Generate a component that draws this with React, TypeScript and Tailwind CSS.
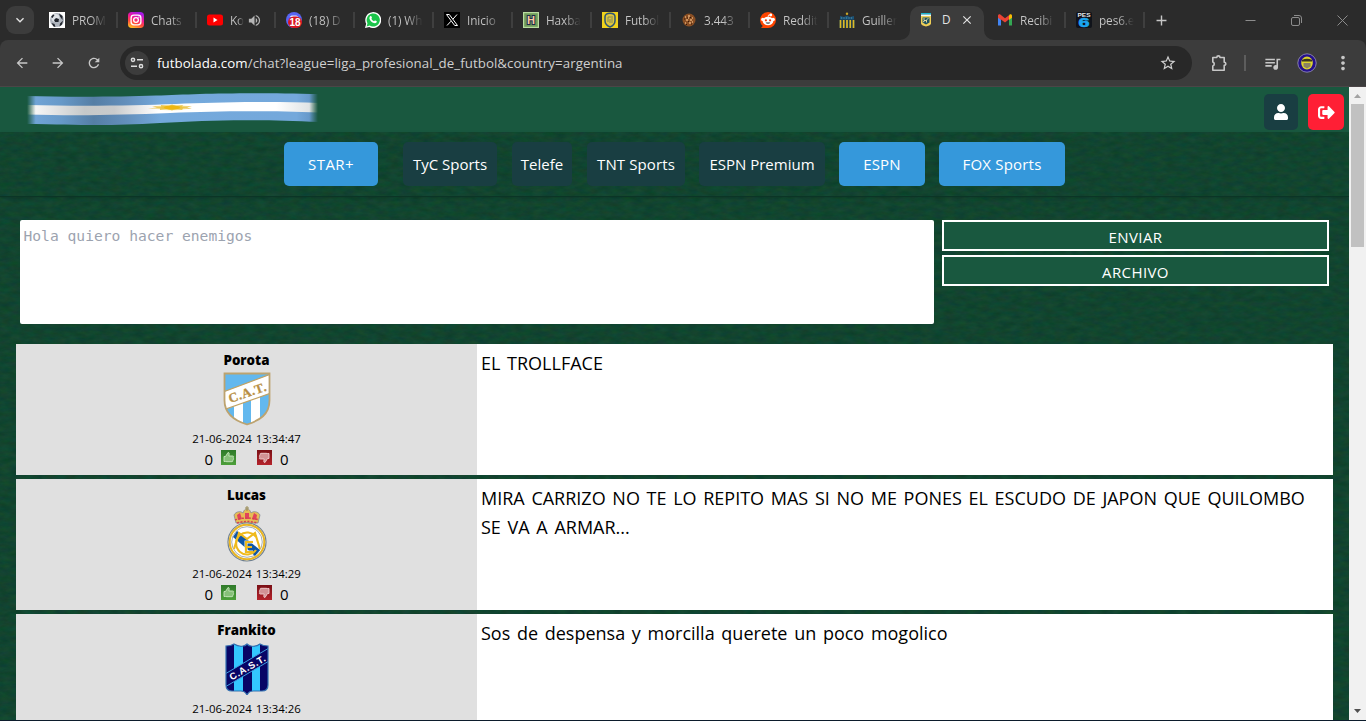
import React from 'react';
import { MdQueueMusic, MdStarOutline, MdArrowBack, MdArrowForward, MdRefresh, MdMoreVert, MdClose, MdAdd, MdVolumeUp, MdKeyboardArrowDown } from 'react-icons/md';
import { FaUser, FaSignOutAlt } from 'react-icons/fa';

function BallIcon() {
  return (
    <svg width="16" height="16" viewBox="0 0 16 16">
      <rect width="16" height="16" fill="#fff" />
      <circle cx="8" cy="8" r="7" fill="#aeb4bd" />
      <circle cx="6.500" cy="6" r="4" fill="#dfe3e8" />
      <path d="M7 6l3 1-.5 3L6 10 5 8zM2 5l2-2.500 1.500.5-2 3zM10 1.500l3.500 2.500v4L11 4.500zM2.500 11l3 1 1 3-2-.5zM11 11.500l3-3-1 4-2.500 2z" fill="#20242c" />
    </svg>
  );
}

function InstagramIcon() {
  return (
    <svg width="16" height="16" viewBox="0 0 17 17">
      <defs>
        <linearGradient id="ig" x1="0.2" y1="1" x2="0.6" y2="0">
          <stop offset="0" stopColor="#ffc524" />
          <stop offset="0.35" stopColor="#ff4a3c" />
          <stop offset="0.65" stopColor="#f0159a" />
          <stop offset="1" stopColor="#a31be8" />
        </linearGradient>
      </defs>
      <rect width="17" height="17" rx="4" fill="url(#ig)" />
      <rect x="3.300" y="3.300" width="10.400" height="10.400" rx="3" fill="none" stroke="#fff" strokeWidth="1.400" />
      <circle cx="8.500" cy="8.500" r="2.500" fill="none" stroke="#fff" strokeWidth="1.400" />
      <circle cx="11.500" cy="5.500" r="0.700" fill="#fff" />
    </svg>
  );
}

function YoutubeIcon() {
  return (
    <svg width="16" height="16" viewBox="0 0 16 16">
      <rect y="2.500" width="16" height="11" rx="2.500" fill="#f00" />
      <path d="M6.500 5.600v4.800L10.500 8z" fill="#fff" />
    </svg>
  );
}

function DiscordIcon() {
  return (
    <svg width="16" height="16" viewBox="0 0 16 16">
      <circle cx="8" cy="8" r="8" fill="#5865f2" />
      <path d="M3.500 5l2-1.500h5l2 1.500z" fill="#e8eaff" />
      <rect x="2" y="4.500" width="14" height="11.500" rx="5.700" fill="#d9161f" />
      <text x="9" y="14" textAnchor="middle" fontFamily="Liberation Sans, sans-serif" fontWeight="700" fontSize="10" fill="#fff">18</text>
    </svg>
  );
}

function WhatsappIcon() {
  return (
    <svg width="16" height="16" viewBox="0 0 16 16">
      <path d="M0 16l1.200-4.200A8 8 0 1 1 4.300 15z" fill="#fff" />
      <path d="M1.600 14.400l.9-3.100A6.600 6.600 0 1 1 4.700 13.600z" fill="#1bc44a" />
      <path d="M5.200 4.200c.5-.4 1-.3 1.200.2l.5 1.200c.1.300-.1.700-.5 1.100.5 1.100 1.400 2 2.600 2.500.6-.8.900-.9 1.200-.7l1.300.6c.4.200.3.800 0 1.400-.7.900-1.900 1-3.500.3C6.200 10 5 8.500 4.600 7.100c-.3-1.200-.1-2.300.6-2.900z" fill="#fff" />
    </svg>
  );
}

function XIcon() {
  return (
    <svg width="16" height="16" viewBox="0 0 16 16">
      <rect width="16" height="16" fill="#000" />
      <path d="M2.500 2.500h2.800l8.200 11h-2.800zM13 2.500L8.900 7.200M7 9.200l-4 4.300" fill="none" stroke="#fff" strokeWidth="1" />
    </svg>
  );
}

function HaxballIcon() {
  return (
    <svg width="16" height="16" viewBox="0 0 16 16">
      <rect x="0.600" y="0.600" width="14.800" height="14.800" fill="#6f9a59" stroke="#b9dda0" strokeWidth="1.200" />
      <text x="8" y="12" textAnchor="middle" fontFamily="Liberation Sans, sans-serif" fontWeight="700" fontSize="11" fill="#f7c9a0" stroke="#1d2a4c" strokeWidth="2" paintOrder="stroke">H</text>
    </svg>
  );
}

function CentralIcon() {
  return (
    <svg width="16" height="16" viewBox="0 0 16 16">
      <rect width="16" height="16" fill="#f0d21b" />
      <path d="M8 1.200c3 0 5 1.300 5 3.500v4c0 3-2 5-5 6.300-3-1.300-5-3.300-5-6.300v-4C3 2.500 5 1.200 8 1.200z" fill="#dfc63e" stroke="#2d5575" strokeWidth="1.500" />
      <path d="M6 5h5M6 5v5M8 7v4M10 6v5" stroke="#7e8a5b" strokeWidth="1" />
    </svg>
  );
}

function CookieIcon() {
  return (
    <svg width="16" height="16" viewBox="0 0 16 16">
      <circle cx="8" cy="8" r="6.500" fill="#8a4f24" />
      <path d="M4 5h1M7 4h2M11 6h1M5 8h2M9 8h2M4 11h1M8 11h2M7 6h1M11 10h1" stroke="#e2aa72" strokeWidth="1.400" />
      <path d="M3 7h1M6 6h1M9 5.500h1M7 9.500h1M10 12h1M5 12.500h1" stroke="#34180a" strokeWidth="1.200" />
    </svg>
  );
}

function RedditIcon() {
  return (
    <svg width="16" height="16" viewBox="0 0 16 16">
      <path d="M8 0a8 8 0 1 1 0 16H1l1.800-2A8 8 0 0 1 8 0z" fill="#ff4500" />
      <circle cx="2.800" cy="7.400" r="1.700" fill="#fff" />
      <circle cx="13.200" cy="7.400" r="1.700" fill="#fff" />
      <circle cx="10.800" cy="3" r="1.400" fill="#fff" />
      <path d="M8 5.500l.5-2.500h2" stroke="#fff" strokeWidth="0.800" fill="none" />
      <ellipse cx="8" cy="9" rx="5.400" ry="4.200" fill="#fff" />
      <circle cx="5.900" cy="8.300" r="1.100" fill="#f03a12" />
      <circle cx="10.100" cy="8.300" r="1.100" fill="#f03a12" />
      <path d="M5.700 10.600h4.600c-.6 1.600-4 1.600-4.600 0z" fill="#24303a" />
    </svg>
  );
}

function GuilleIcon() {
  return (
    <svg width="16" height="16" viewBox="0 0 16 16">
      <circle cx="8" cy="1.800" r="1.200" fill="#c9a526" />
      <path d="M1 4l4 1 3-1.500 3 1.500 4-1v4H1z" fill="#1c5478" />
      <rect x="0" y="7.500" width="16" height="8.500" fill="#1b3548" />
      <path d="M1.500 8v8M4.750 8v8M8 8v8M11.250 8v8M14.500 8v8" stroke="#dcb928" strokeWidth="1.700" />
      <path d="M2 6h12" stroke="#69a3b5" strokeWidth="0.800" strokeDasharray="1 1.500" />
    </svg>
  );
}

function LigaIcon() {
  return (
    <svg width="16" height="16" viewBox="0 0 16 16">
      <rect x="3" y="1" width="10" height="1.500" fill="#19b7d3" />
      <rect x="3" y="2.500" width="10" height="1.500" fill="#e8fbff" />
      <path d="M3 4h10v7.500c0 1.500-3 2.500-5 3-2-.5-5-1.500-5-3z" fill="#f0cf57" />
      <path d="M4.500 5.500h7v5L8 12.500l-3.500-2z" fill="#1e5262" />
      <path d="M6 6v2.500h2M10.500 6L8.500 8v2.500M5 10l2-1.500" fill="none" stroke="#f3e3a0" strokeWidth="0.900" />
    </svg>
  );
}

function GmailIcon() {
  return (
    <svg width="16" height="16" viewBox="0 0 16 16">
      <path d="M1 4v9.500h3V7.200z" fill="#4285f4" />
      <path d="M15 4v9.500h-3V7.200z" fill="#34a853" />
      <path d="M4 4.200V8L1 5.700v-2c0-1.200 1.400-1.800 2.300-1.100L8 6.200l4-3v4L8 10.500 4 7.500z" fill="#ea4335" />
      <path d="M12 3.200V8l3-2.300V3.700c0-1.200-1.400-1.800-2.300-1.100z" fill="#fbbc04" />
    </svg>
  );
}

function PesIcon() {
  return (
    <svg width="16" height="16" viewBox="0 0 16 16">
      <rect width="16" height="16" rx="2" fill="#10131a" />
      <text x="8" y="5" textAnchor="middle" fontFamily="Liberation Sans, sans-serif" fontWeight="700" fontSize="5.500" textLength="13" lengthAdjust="spacingAndGlyphs" fill="#e4e8ea">PES</text>
      <text x="8" y="14.500" textAnchor="middle" fontFamily="Liberation Sans, sans-serif" fontWeight="700" fontSize="12" textLength="11" lengthAdjust="spacingAndGlyphs" fill="#1ba5f0" stroke="#1ba5f0" strokeWidth="0.600">6</text>
    </svg>
  );
}

const tabs = [
  { title: 'PROM', icon: <BallIcon /> },
  { title: 'Chats', icon: <InstagramIcon /> },
  { title: 'Ko', icon: <YoutubeIcon />, audio: true },
  { title: '(18) D', icon: <DiscordIcon /> },
  { title: '(1) Wh', icon: <WhatsappIcon /> },
  { title: 'Inicio', icon: <XIcon /> },
  { title: 'Haxba', icon: <HaxballIcon /> },
  { title: 'Futbol', icon: <CentralIcon /> },
  { title: '3.443', icon: <CookieIcon /> },
  { title: 'Reddit', icon: <RedditIcon /> },
  { title: 'Guiller', icon: <GuilleIcon />, last: true },
  { title: 'D', icon: <LigaIcon />, active: true },
  { title: 'Recibi', icon: <GmailIcon /> },
  { title: 'pes6.e', icon: <PesIcon /> },
];

function TabStrip() {
  return (
    <div className="flex h-10 items-center bg-[#2b2b2b] pl-1.5">
      <button className="flex size-7 items-center justify-center rounded-[9px] bg-[#3c3c3c]">
        <MdKeyboardArrowDown className="size-4 text-[#e3e3e3]" />
      </button>
      <div className="ml-1 flex h-full">
        {tabs.map((tab) =>
          tab.active ? (
            <div key={tab.title + 'active'} className="relative flex h-full w-[79px] pt-1.5 pr-[2px] pl-[3px]">
              <svg className="absolute bottom-0 -left-[7px]" width="10" height="10" viewBox="0 0 10 10"><path d="M10 0v10H0A10 10 0 0 0 10 0z" fill="#3c3c3c" /></svg>
              <svg className="absolute -right-[8px] bottom-0" width="10" height="10" viewBox="0 0 10 10"><path d="M0 0v10h10A10 10 0 0 1 0 0z" fill="#3c3c3c" /></svg>
              <div className="flex flex-1 items-center rounded-t-[10px] bg-[#3c3c3c] pb-1.5 pl-2">
                {tab.icon}
                <span className="ml-[8px] w-[15px] text-[11.8px] text-[#e3e3e3]">{tab.title}</span>
                <MdClose className="ml-[3px] size-[14px] text-[#e3e3e3]" />
              </div>
            </div>
          ) : (
            <div key={tab.title} className="flex h-full w-[79px] items-center pl-[10px]">
              <span className="flex w-[17px] shrink-0 justify-center">{tab.icon}</span>
              <span className={`ml-[7px] overflow-hidden bg-linear-to-r from-[#c7c7c7] from-55% to-[#2b2b2b] bg-clip-text pt-px text-[11.8px] tracking-[-0.1px] whitespace-nowrap text-transparent ${tab.audio ? 'w-[14px]' : 'w-[35px]'}`}>{tab.title}</span>
              {tab.audio && <MdVolumeUp className="ml-[3px] size-[15px] shrink-0 text-[#b5b5b5]" />}
              {!tab.last && <span className="mr-[-1px] ml-auto h-4 w-[2px] shrink-0 bg-[#3f3f3f]" />}
            </div>
          ),
        )}
      </div>
      <MdAdd className="ml-[9px] size-[17px] text-[#c7c7c7]" />
      <div className="ml-auto flex items-center gap-[35px] pr-[18px] text-[#8c8c8c]">
        <svg width="11" height="11" viewBox="0 0 11 11"><path d="M0.500 5.500h10" stroke="currentColor" /></svg>
        <svg width="11" height="11" viewBox="0 0 11 11" fill="none" stroke="currentColor"><rect x="0.500" y="2.500" width="8" height="8" rx="1.500" /><path d="M3 .5h5a2.500 2.500 0 0 1 2.500 2.500v5" /></svg>
        <svg width="11" height="11" viewBox="0 0 11 11"><path d="M.5.500l10 10M10.500.500l-10 10" stroke="currentColor" /></svg>
      </div>
    </div>
  );
}

function Toolbar() {
  return (
    <div className="bg-[#2b2b2b]">
      <div className="flex h-[46px] items-center rounded-t-lg bg-[#3c3c3c] text-[#c7c7c7]">
        <div className="ml-[14px] flex items-center gap-5">
          <MdArrowBack className="size-4" />
          <MdArrowForward className="size-4" />
          <MdRefresh className="size-4" />
        </div>
        <div className="ml-[18px] flex h-[34px] w-[1072px] shrink-0 items-center rounded-full bg-[#282828] pr-[15px] pl-[5px]">
          <span className="flex size-6 items-center justify-center rounded-full bg-[#3c3c3c]">
            <svg width="14" height="14" viewBox="0 0 14 14" fill="none" stroke="#dcdcdc" strokeWidth="1.500">
              <circle cx="3" cy="3.800" r="1.600" /><path d="M7 3.800h6M1 10.200h6" /><circle cx="11" cy="10.200" r="1.600" />
            </svg>
          </span>
          <span className="ml-2 pt-px text-[13.3px] tracking-[0.06px] whitespace-nowrap text-[#cfcfcf]"><span className="text-white">futbolada.com</span>/chat?league=liga_profesional_de_futbol&amp;country=argentina</span>
          <MdStarOutline className="ml-auto size-[18px] text-[#d0d0d0]" />
        </div>
        <svg className="ml-[19px]" width="17" height="17" viewBox="0 0 17 17" fill="none" stroke="currentColor" strokeWidth="1.600" strokeLinejoin="round">
          <path d="M1.800 2.500h4a1.500 1.500 0 0 1 3.200 0h4.200v4.700a1.500 1.500 0 0 1 0 3.200v4.800H1.800v-4.200a2.100 2.100 0 0 0 0-4z" />
        </svg>
        <span className="ml-[16px] h-4 w-[2px] bg-[#5d5d5d]" />
        <MdQueueMusic className="ml-[17px] size-[19px]" />
        <svg className="ml-[15px]" width="20" height="20" viewBox="0 0 20 20">
          <circle cx="10" cy="10" r="9.200" fill="#24108b" stroke="#aaa5c8" strokeWidth="0.700" />
          <ellipse cx="10" cy="10" rx="5.800" ry="6.500" fill="#dbd32e" />
          <path d="M5 7q5-2.500 10 0v1.500H5z" fill="#39341e" />
          <path d="M6.500 10h7v3.500L10 15.500 6.500 13.500z" fill="#8a8263" />
        </svg>
        <MdMoreVert className="ml-[15px] size-[22px]" />
      </div>
      <div className="h-px bg-[#4b4547]" />
    </div>
  );
}

function Flag() {
  return (
    <svg width="294" height="36" viewBox="0 0 294 36">
      <defs>
        <linearGradient id="blue" x1="0" x2="1">
          <stop offset="0" stopColor="#74a8db" /><stop offset="0.120" stopColor="#6799c8" /><stop offset="0.230" stopColor="#557ea5" />
          <stop offset="0.340" stopColor="#638fbb" /><stop offset="0.460" stopColor="#74a9dc" /><stop offset="0.920" stopColor="#74a8db" /><stop offset="1" stopColor="#5c8cbc" />
        </linearGradient>
        <linearGradient id="white" x1="0" x2="1">
          <stop offset="0" stopColor="#fff" /><stop offset="0.200" stopColor="#c5c8c9" /><stop offset="0.300" stopColor="#c9cbcc" />
          <stop offset="0.450" stopColor="#fff" /><stop offset="0.850" stopColor="#fff" /><stop offset="1" stopColor="#d5dadd" />
        </linearGradient>
        <linearGradient id="edge" x1="0" x2="1">
          <stop offset="0" stopColor="#000" /><stop offset="0.030" stopColor="#fff" /><stop offset="0.970" stopColor="#fff" /><stop offset="1" stopColor="#000" />
        </linearGradient>
        <radialGradient id="sun"><stop offset="0" stopColor="#f0b90e" /><stop offset="0.500" stopColor="#eec63b" /><stop offset="1" stopColor="#f5e6b0" stopOpacity="0" /></radialGradient>
        <mask id="fade"><rect x="1" width="291" height="36" fill="url(#edge)" /></mask>
      </defs>
      <g mask="url(#fade)">
        <path d="M0 4C40 5 90 5 130 3.500S210 0 294 2v28c-70-3-110-2-160 1S60 33 0 32z" fill="url(#blue)" />
        <path d="M0 13c60 1.500 110 .5 150-1s90-3 144-1v9.500c-60-2-100-1.500-150 .5s-90 3-144 1.500z" fill="url(#white)" />
        <path d="M122 16.500l9-1-5-1.500 9 .5 0-1.500 8 1 3-1.500 4 1.500 7-1-1 1.500 10-.5-5 1.500 5 1.500-9-.5-1 1.500-7-1-3 1.500-4-1.500-8 1 0-1.500z" fill="#e9c14c" />
        <ellipse cx="146" cy="15.500" rx="20" ry="3.500" fill="url(#sun)" opacity="0.700" />
        <ellipse cx="146" cy="15.500" rx="8" ry="2" fill="#efb711" />
      </g>
    </svg>
  );
}

function GrassTexture() {
  return (
    <svg className="absolute inset-0 h-full w-full" aria-hidden="true">
      <filter id="grass" x="0" y="0" width="100%" height="100%" colorInterpolationFilters="sRGB">
        <feTurbulence type="fractalNoise" baseFrequency="0.090 0.200" numOctaves="4" seed="8" />
        <feColorMatrix values="0.080 0 0 0 0.028  0 0.080 0 0 0.228  0 0 0.080 0 0.144  0 0 0 0 1" />
      </filter>
      <rect width="100%" height="100%" filter="url(#grass)" />
    </svg>
  );
}

const channels = [
  { name: 'STAR+', className: 'w-[94px] bg-[#3598db] mr-[25px] tracking-[0.4px]' },
  { name: 'TyC Sports', className: 'w-[94px] bg-[#193e42] mr-[15px]' },
  { name: 'Telefe', className: 'w-[60px] bg-[#193e42] mr-[15px]' },
  { name: 'TNT Sports', className: 'w-[98px] bg-[#193e42] mr-[14px] tracking-[0.1px]' },
  { name: 'ESPN Premium', className: 'w-[126px] bg-[#193e42] mr-[14px]' },
  { name: 'ESPN', className: 'w-[86px] bg-[#3598db] mr-[14px] tracking-[0.2px]' },
  { name: 'FOX Sports', className: 'w-[126px] bg-[#3598db] tracking-[0.2px]' },
];

function TucumanCrest() {
  return (
    <svg width="48" height="54" viewBox="0 0 48 54">
      <defs><clipPath id="cat"><path d="M1.500 1.500h45v27c0 14-10 20-22.500 24C11 48.500 1.500 42 1.500 28.500z" /></clipPath></defs>
      <g clipPath="url(#cat)">
        <rect width="48" height="54" fill="#63b8ee" />
        <path d="M11 25h9v29h-9zM28 25h9v29h-9z" fill="#fff" />
        <path d="M0 20L48 2v19L0 38z" fill="#fff" />
        <path d="M0 20L48 2M0 38l48-17" stroke="#c2a263" strokeWidth="1.200" />
      </g>
      <path d="M1.500 1.500h45v27c0 14-10 20-22.500 24C11 48.500 1.500 42 1.500 28.500z" fill="none" stroke="#bda36f" strokeWidth="1.800" />
      <text x="24" y="25" textAnchor="middle" transform="rotate(-19 24 20)" fontFamily="Liberation Serif, serif" fontWeight="700" fontSize="13" textLength="39" fill="#b98f43" stroke="#b98f43" strokeWidth="0.300">C.A.T.</text>
    </svg>
  );
}

function MadridCrest() {
  return (
    <svg width="40" height="56" viewBox="0 0 40 56">
      <path d="M9 17L7 9c2-4 7-4 9-2 1-3 2-4 4-4s3 1 4 4c2-2 7-2 9 2l-2 8z" fill="#e6bd55" stroke="#7b8290" strokeWidth="0.700" />
      <path d="M10 9l3-2 2 6-4 1zM30 9l-3-2-2 6 4 1zM18 7h4v6h-4z" fill="#e1435b" />
      <path d="M20 0v5M18 2h4" stroke="#9a8d56" strokeWidth="1" />
      <path d="M8 14q12-4 24 0M10 17q10-3 20 0" stroke="#d64052" strokeWidth="1.500" fill="none" strokeDasharray="2 1.500" />
      <circle cx="20" cy="36" r="19" fill="#fff" stroke="#708191" strokeWidth="1.200" />
      <circle cx="20" cy="36" r="17.300" fill="#fff" stroke="#e8b524" strokeWidth="2" />
      <circle cx="20" cy="36" r="15.300" fill="#fff" stroke="#7f8b91" strokeWidth="0.700" />
      <path d="M6 31l4-6 23 19-5 6z" fill="#0f56a6" />
      <g fill="none" stroke="#e9f0f6" strokeWidth="3"><path d="M26 36h-7v10h7" /></g>
      <g fill="none" stroke="#efba1d" strokeWidth="2.100"><path d="M7 43l5-16 8 6 8-6 5 16" /><path d="M29 31a11 11 0 1 0 0 13" /><path d="M26 36h-7v10h7M19 41h6" /></g>
    </svg>
  );
}

function TristanCrest() {
  const outline = 'M1 3q5 0 8-2 5 3 9 2 2 0 4-2 2 2 4 2 5 1 9-2 3 2 8 2v39q0 6-6 6h-9q-4 0-6 4-2-4-6-4H7q-6 0-6-6z';
  return (
    <svg width="44" height="52" viewBox="0 0 44 52">
      <defs><clipPath id="cast"><path d={outline} /></clipPath></defs>
      <g clipPath="url(#cast)">
        <rect width="44" height="52" fill="#080566" />
        <path d="M9 0h9v52H9zM27 0h8v52h-8z" fill="#33c7ff" />
        <path d="M0 31L44 5v13L0 44z" fill="#080566" />
        <path d="M0 31L44 5M0 44l44-26" stroke="#3e9fe0" strokeWidth="1" />
      </g>
      <path d={outline} fill="none" stroke="#3370b1" strokeWidth="1.200" />
      <text x="22" y="28" textAnchor="middle" transform="rotate(-30 22 24)" fontFamily="Liberation Sans, sans-serif" fontWeight="700" fontSize="9.500" textLength="40" fill="#fff">C.A.S.T.</text>
    </svg>
  );
}

function Thumb({ down = false }: { down?: boolean }) {
  return (
    <svg width="15" height="15" viewBox="0 0 15 15">
      <defs>
        <linearGradient id={down ? 'td' : 'tu'} x1="0" y1="0" x2="0" y2="1">
          <stop offset="0" stopColor={down ? '#7a1016' : '#2f7a2a'} /><stop offset="1" stopColor={down ? '#b5242c' : '#4da03a'} />
        </linearGradient>
      </defs>
      <rect width="15" height="15" fill={down ? 'url(#td)' : 'url(#tu)'} />
      <g transform={down ? 'rotate(180 7.500 7.500)' : undefined} stroke={down ? '#efcfd0' : '#c9e8c0'}>
        <path d="M3 6.500h1.500l2.500-4c1.300 0 1.500 1 .8 3.500h4c1 0 1 1.200.4 1.500.6.300.5 1.300-.1 1.500.4.400.3 1.200-.3 1.400.3.500 0 1.300-.8 1.300H6L4.500 11.500H3z" fill={down ? '#d29295' : '#86c078'} strokeWidth="0.900" />
      </g>
    </svg>
  );
}

const posts = [
  { author: 'Porota', date: '21-06-2024 13:34:47', crest: <TucumanCrest />, lines: ['EL TROLLFACE'], votes: true },
  { author: 'Lucas', date: '21-06-2024 13:34:29', crest: <MadridCrest />, lines: ['MIRA CARRIZO NO TE LO REPITO MAS SI NO ME PONES EL ESCUDO DE JAPON QUE QUILOMBO', 'SE VA A ARMAR...'], votes: true },
  { author: 'Frankito', date: '21-06-2024 13:34:26', crest: <TristanCrest />, lines: ['Sos de despensa y morcilla querete un poco mogolico'], votes: false },
];

function Post({ post }: { post: (typeof posts)[number] }) {
  return (
    <article className={`flex shrink-0 bg-white text-black ${post.votes ? 'h-[131px]' : 'h-[106px]'}`}>
      <div className="flex w-[461px] shrink-0 flex-col items-center bg-[#e0e0e0] pt-[6px]">
        <h3 className="h-5 text-[13.300px] leading-5 font-extrabold">{post.author}</h3>
        <div className="flex h-[60px] items-center justify-center pb-[2px]">{post.crest}</div>
        <time className="h-[19px] text-[11.400px] leading-[18px] [word-spacing:1px]">{post.date}</time>
        {post.votes && (
          <div className="flex h-5 items-center text-[15px] leading-5">
            <span>0</span>
            <span className="mr-[21px] ml-2 pb-[3px]"><Thumb /></span>
            <span className="mr-2 pb-[3px]"><Thumb down /></span>
            <span>0</span>
          </div>
        )}
      </div>
      <div className="pt-[5px] pl-1 text-[18px] leading-[29px] whitespace-nowrap [word-spacing:2px]">
        {post.lines.map((line) => <p key={line}>{line}</p>)}
      </div>
    </article>
  );
}

function Scrollbar() {
  return (
    <div className="flex w-[17px] shrink-0 flex-col items-center bg-[#f1f1f1]">
      <svg width="17" height="17" viewBox="0 0 17 17"><path d="M5 11l3.500-4 3.500 4z" fill="#a3a3a3" /></svg>
      <div className="h-[143px] w-[13px] bg-[#c1c1c1]" />
      <svg className="mt-auto" width="17" height="17" viewBox="0 0 17 17"><path d="M5 6l3.500 4L12 6z" fill="#505050" /></svg>
    </div>
  );
}

export default function App() {
  return (
    <div className="flex h-[721px] w-[1366px] flex-col overflow-hidden bg-[#0c1c2c] font-['Open_Sans','Noto_Sans',sans-serif] text-white">
      <TabStrip />
      <Toolbar />
      <div className="flex h-[633px] shrink-0">
        <div className="relative flex flex-1 flex-col overflow-hidden bg-[#10452f]">
          <GrassTexture />
          <header className="relative flex h-[45px] shrink-0 items-center bg-[#19583f] pr-[5px] pl-[26px]">
            <Flag />
            <button className="mt-[5px] ml-auto flex h-9 w-[34px] items-center justify-center rounded-[5px] bg-[#193e42]"><FaUser className="size-4" /></button>
            <button className="mt-[5px] ml-[10px] flex size-9 items-center justify-center rounded-[5px] bg-[#ff1f35]"><FaSignOutAlt className="size-[17px]" /></button>
          </header>
          <nav className="relative flex h-[65px] shrink-0 border-b border-[#0b3526] pt-[10px] pl-[284px] shadow-sm">
            {channels.map((c) => (
              <button key={c.name} className={`h-11 shrink-0 rounded-[5px] text-[15px] whitespace-nowrap ${c.className}`}>{c.name}</button>
            ))}
          </nav>
          <form className="relative flex h-[147px] shrink-0 gap-2 px-5 pt-[23px]">
            <textarea className="h-[104px] w-[914px] resize-none rounded-[2px] bg-white px-[3.500px] pt-1 font-['DejaVu_Sans_Mono',monospace] text-[14.630px] leading-6 placeholder:text-[#9ca3af]" placeholder="Hola quiero hacer enemigos" />
            <div className="flex flex-1 flex-col gap-1">
              <button type="button" className="h-[31px] border-2 border-white bg-[#19583f] pt-[3px] text-[15px] leading-6 tracking-[0.4px]">ENVIAR</button>
              <button type="button" className="h-[31px] border-2 border-white bg-[#19583f] pt-[3px] text-[15px] leading-6 tracking-[0.4px]">ARCHIVO</button>
            </div>
          </form>
          <main className="relative flex flex-col gap-1 px-4">
            {posts.map((post) => <Post key={post.author} post={post} />)}
          </main>
        </div>
        <Scrollbar />
      </div>
    </div>
  );
}
